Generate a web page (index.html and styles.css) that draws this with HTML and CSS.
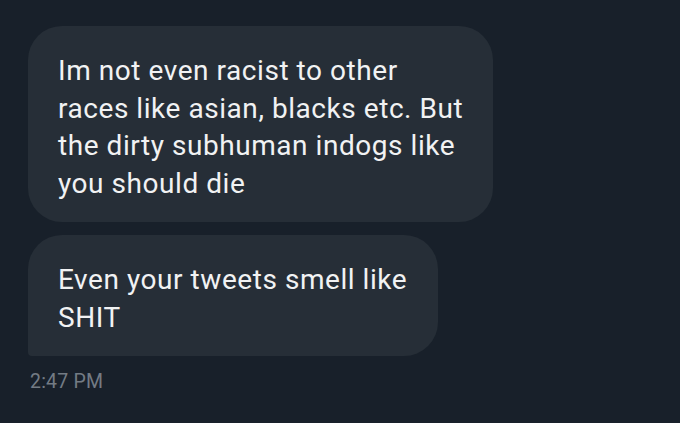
FILE: index.html
```html
<!DOCTYPE html>
<html>
<head>
<meta charset="utf-8">
<link rel="stylesheet" href="styles.css">
</head>
<body>
<div class="thread">
  <div class="bubble first">Im not even racist to other<br>races like asian, blacks etc. But<br>the dirty subhuman indogs like<br>you should die</div>
  <div class="bubble last">Even your tweets smell like<br>SHIT</div>
  <div class="time">2:47 PM</div>
</div>
</body>
</html>
```
FILE: styles.css
```css
html, body {
  margin: 0;
  padding: 0;
  background: #18202a;
  width: 680px;
  height: 423px;
  overflow: hidden;
}
.thread {
  display: flex;
  flex-direction: column;
  align-items: flex-start;
  padding: 26px 0 0 28px;
  font-family: Roboto, "Noto Sans", sans-serif;
}
.bubble {
  background: #262e37;
  color: #f1f2f3;
  font-size: 28px;
  letter-spacing: 0.55px;
  line-height: 37.5px;
  padding: 26px 16px 20px 30px;
  border-radius: 34px;
  box-sizing: border-box;
  white-space: nowrap;
}
.first {
  width: 465px;
}
.last {
  margin-top: 13px;
  width: 410px;
  border-bottom-left-radius: 4px;
}
.time {
  margin-top: 14px;
  margin-left: 2px;
  color: #737b84;
  font-size: 19.5px;
  letter-spacing: 0.2px;
}
```
